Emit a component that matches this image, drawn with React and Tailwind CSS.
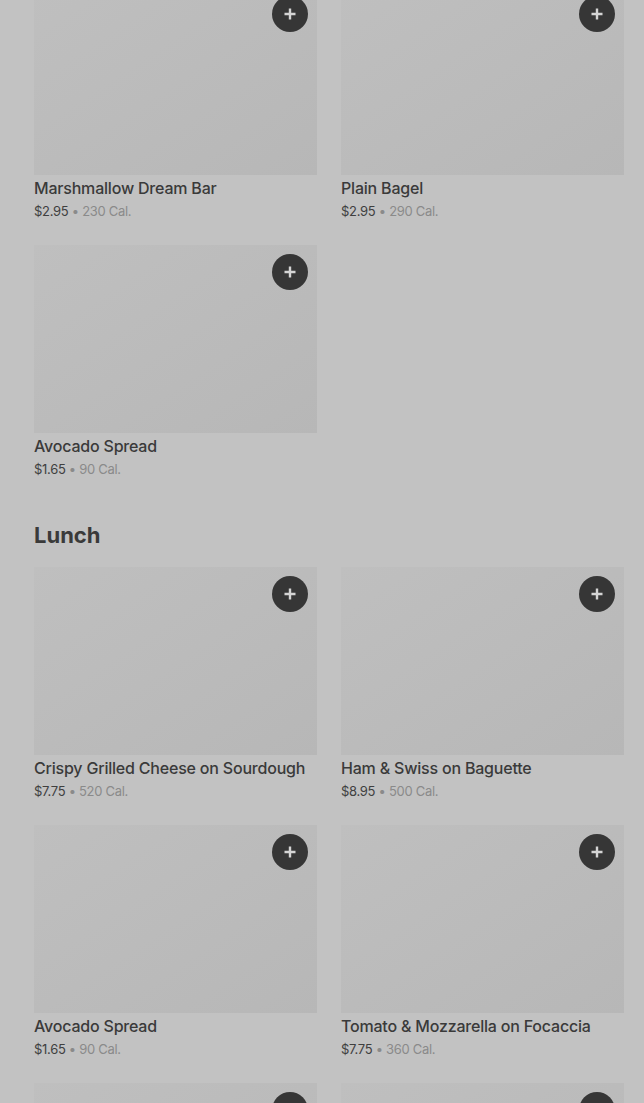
import React from 'react';

const breakfast = [
  { name: 'Marshmallow Dream Bar', price: '$2.95', cal: '230 Cal.' },
  { name: 'Plain Bagel', price: '$2.95', cal: '290 Cal.' },
  { name: 'Avocado Spread', price: '$1.65', cal: '90 Cal.' },
];

const lunch = [
  { name: 'Crispy Grilled Cheese on Sourdough', price: '$7.75', cal: '520 Cal.' },
  { name: 'Ham & Swiss on Baguette', price: '$8.95', cal: '500 Cal.' },
  { name: 'Avocado Spread', price: '$1.65', cal: '90 Cal.' },
  { name: 'Tomato & Mozzarella on Focaccia', price: '$7.75', cal: '360 Cal.' },
  { name: 'Turkey & Cheddar on Ciabatta', price: '$8.45', cal: '540 Cal.' },
  { name: 'Classic Chicken Salad Sandwich', price: '$8.25', cal: '610 Cal.' },
];

function PlusIcon() {
  return (
    <svg width="14" height="14" viewBox="0 0 14 14" fill="none">
      <path d="M7 1.5v11M1.5 7h11" stroke="#d4d4d4" strokeWidth="2.4" />
    </svg>
  );
}

// Single menu item: image placeholder, add button, title and price line
function ItemCard({ item }) {
  return (
    <div className="flex flex-col">
      <div className="relative h-[188px] bg-gradient-to-br from-[#bfbfbf] to-[#b7b7b7]">
        <button className="absolute top-[9px] right-[9px] w-9 h-9 rounded-full bg-[#363636] flex items-center justify-center">
          <PlusIcon />
        </button>
      </div>
      <div className="mt-[3px] text-[16px] leading-[20px] font-medium tracking-[-0.2px] text-[#3a3a3a] truncate">
        {item.name}
      </div>
      <div className="mt-[3px] text-[13px] leading-[20px] tracking-[-0.3px]">
        <span className="text-[#3f3f3f]">{item.price}</span>
        <span className="text-[#8a8a8a]"> • {item.cal}</span>
      </div>
    </div>
  );
}

export default function App() {
  return (
    <div
      className="w-[644px] h-[1103px] overflow-hidden bg-[#c2c2c2]"
      style={{ fontFamily: 'Inter, "Noto Sans", sans-serif' }}
    >
      <div className="pl-[34px] pr-[20px] -mt-[13px]">
        {/* Breakfast items (scrolled) */}
        <div className="grid grid-cols-2 gap-x-6 gap-y-6">
          {breakfast.map((item, i) => (
            <ItemCard key={i} item={item} />
          ))}
        </div>

        {/* Lunch section */}
        <h2 className="mt-10 mb-4 text-[22px] leading-[32px] font-bold text-[#3a3a3a]">Lunch</h2>
        <div className="grid grid-cols-2 gap-x-6 gap-y-6">
          {lunch.map((item, i) => (
            <ItemCard key={i} item={item} />
          ))}
        </div>
      </div>
    </div>
  );
}
